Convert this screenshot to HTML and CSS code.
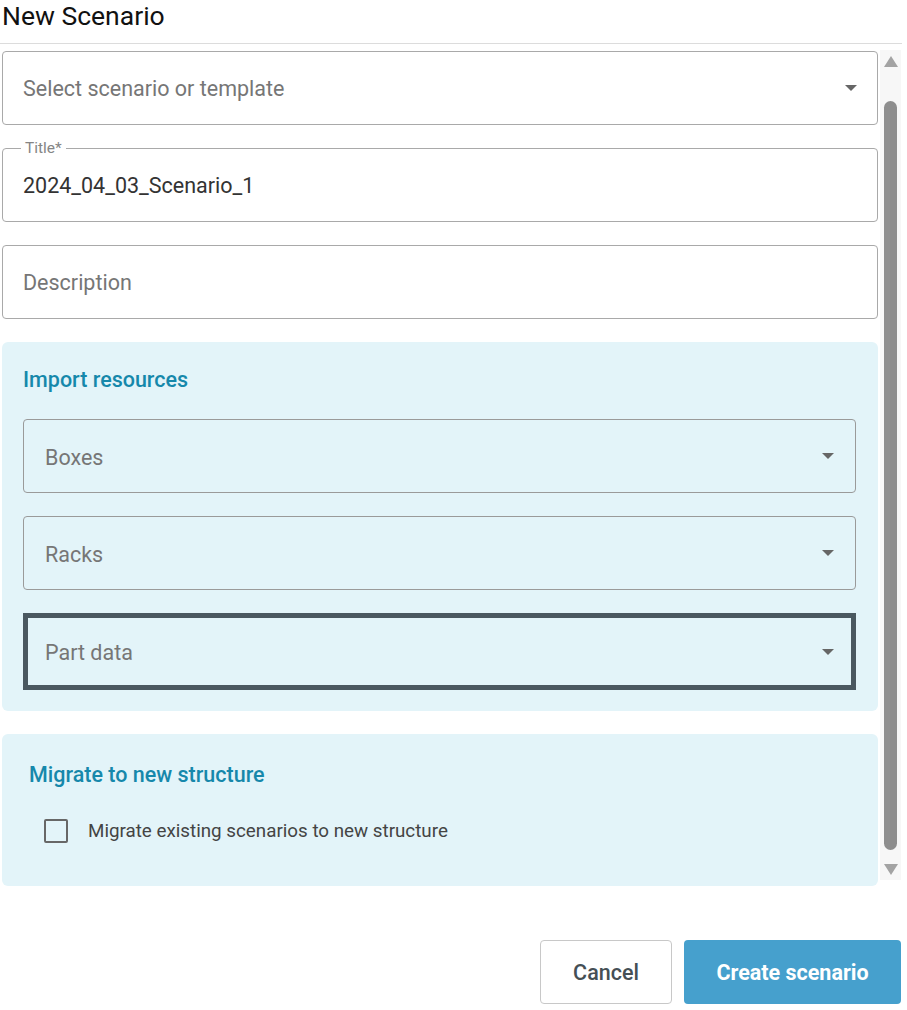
FILE: index.html
```html
<!DOCTYPE html>
<html>
<head>
<meta charset="utf-8">
<link rel="stylesheet" href="styles.css">
</head>
<body>
<div class="dialog">
  <div class="header"><h1 class="title">New Scenario</h1></div>
  <div class="scroll">
    <div class="content">
      <div class="field"><span class="placeholder">Select scenario or template</span><span class="caret"></span></div>
      <div class="field labeled"><span class="notch">Title*</span><span class="value">2024_04_03_Scenario_1</span></div>
      <div class="field"><span class="placeholder">Description</span></div>
      <div class="section">
        <div class="section-title">Import resources</div>
        <div class="sfield"><span class="placeholder">Boxes</span><span class="caret"></span></div>
        <div class="sfield"><span class="placeholder">Racks</span><span class="caret"></span></div>
        <div class="sfield focused"><span class="placeholder">Part data</span><span class="caret"></span></div>
      </div>
      <div class="section section2">
        <div class="section-title">Migrate to new structure</div>
        <label class="check-row"><span class="checkbox"></span><span class="check-label">Migrate existing scenarios to new structure</span></label>
      </div>
    </div>
    <div class="scrollbar">
      <span class="arrow-up"></span>
      <span class="thumb"></span>
      <span class="arrow-down"></span>
    </div>
  </div>
  <div class="footer">
    <button class="btn btn-cancel">Cancel</button>
    <button class="btn btn-primary">Create scenario</button>
  </div>
</div>
</body>
</html>
```
FILE: styles.css
```css
* { box-sizing: border-box; }
html, body { margin: 0; padding: 0; background: #fff; }
body { font-family: Roboto, "Noto Sans", "Liberation Sans", sans-serif; width: 907px; height: 1010px; overflow: hidden; }

.dialog { display: flex; flex-direction: column; width: 907px; }

.header { height: 44px; border-bottom: 1px solid #dcdcdc; width: 902px; padding-left: 2px; }
.title { margin: 0; font-size: 26.5px; font-weight: 400; color: #111; line-height: 32px; }

.scroll { display: flex; height: 836px; margin-top: 6px; }
.content { width: 880px; padding: 1px 0 0 2px; display: flex; flex-direction: column; gap: 23px; }

.field {
  position: relative;
  height: 74px;
  width: 876px;
  border: 1px solid #a9a9a9;
  border-radius: 4px;
  display: flex;
  align-items: center;
  padding-left: 20px;
  background: #fff;
}
.placeholder { font-size: 21.5px; color: #767676; }
.value { font-size: 21.5px; color: #333; }
.field .placeholder, .field .value { margin-top: 1px; }
.notch {
  position: absolute;
  top: -9px;
  left: 18px;
  padding: 0 4px;
  background: #fff;
  font-size: 15.5px;
  line-height: 16px;
  color: #858585;
}
.caret {
  position: absolute;
  right: 20px;
  top: 50%;
  margin-top: -3px;
  width: 0; height: 0;
  border-left: 6px solid transparent;
  border-right: 6px solid transparent;
  border-top: 6px solid #666;
}

.section {
  width: 876px;
  background: #e3f4f9;
  border-radius: 6px;
  padding: 26px 22px 21px 21px;
  display: flex;
  flex-direction: column;
  gap: 23px;
}
.section-title { font-size: 21.5px; font-weight: 500; color: #1688ab; line-height: 24px; margin-bottom: 4px; }

.sfield {
  position: relative;
  height: 74px;
  border: 1px solid #9a9a9a;
  border-radius: 4px;
  display: flex;
  align-items: center;
  padding-left: 21px;
}
.sfield .placeholder { margin-top: 2px; }
.sfield .caret { right: 21px; }
.sfield.focused { border: 5px solid #4a5860; border-radius: 0; height: 77px; padding-left: 17px; }
.sfield.focused .caret { right: 17px; }

.section2 { height: 152px; padding: 29px 20px 0 27px; gap: 32px; }
.section2 .section-title { margin-bottom: 0; }
.check-row { display: flex; align-items: center; gap: 20px; padding-left: 15px; }
.checkbox { width: 24px; height: 24px; border: 2px solid #676767; border-radius: 2px; flex: none; }
.check-label { font-size: 18.8px; color: #444; }

.scrollbar {
  width: 21px;
  height: 830px;
  background: #f7f7f7;
  position: relative;
  display: flex;
  flex-direction: column;
  align-items: center;
}
.arrow-up {
  margin-top: 6px;
  width: 0; height: 0;
  border-left: 7px solid transparent;
  border-right: 7px solid transparent;
  border-bottom: 11px solid #a3a3a3;
}
.thumb { margin-top: 34px; width: 13px; height: 749px; border-radius: 7px; background: #8e8e8e; }
.arrow-down {
  margin-top: 14px;
  width: 0; height: 0;
  border-left: 7px solid transparent;
  border-right: 7px solid transparent;
  border-top: 11px solid #a3a3a3;
}

.footer { display: flex; justify-content: flex-end; gap: 12px; padding-right: 6px; margin-top: 54px; }
.btn { height: 64px; border-radius: 4px; font-family: Roboto, "Liberation Sans", sans-serif; font-size: 21.5px; cursor: pointer; }
.btn-cancel { width: 132px; background: #fff; border: 1px solid #c8c8c8; color: #454f55; font-weight: 500; }
.btn-primary { width: 217px; background: #46a0cd; border: none; color: #fff; font-weight: 700; }
```
